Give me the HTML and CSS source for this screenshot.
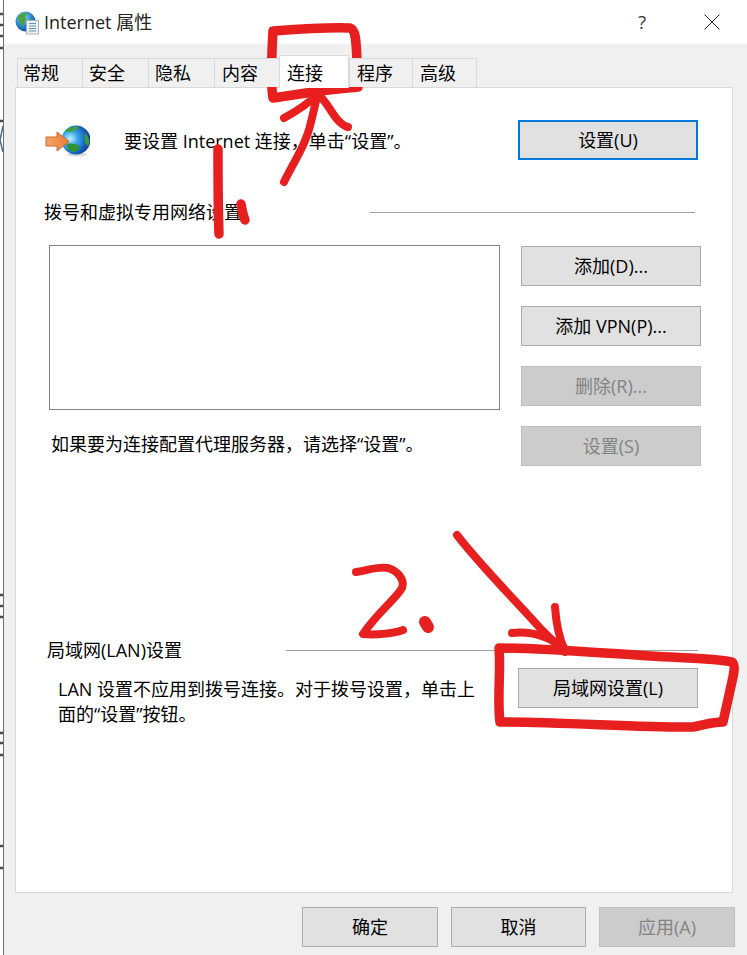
FILE: index.html
```html
<!DOCTYPE html>
<html lang="zh-CN">
<head>
<meta charset="utf-8">
<title>Internet 属性</title>
<link rel="stylesheet" href="styles.css">
</head>
<body>
<div class="screen">
  <div class="backdrop">
    <svg viewBox="0 0 3 955" width="3" height="955">
      <path d="M0 14h3M0 25h3M0 36h3M0 48h3M0 121h3M0 595h3M0 606h3M0 617h3M0 733h3M0 743h3M0 755h3M0 846h3M0 868h3" stroke="#4a4a4a" stroke-width="2.500"/>
      <path d="M3 126L0 140 3 152" stroke="#4a6a8a" stroke-width="1.500" fill="none"/>
    </svg>
  </div>
  <div class="dialog">
    <header class="titlebar">
      <svg class="title-icon" viewBox="0 0 24 24" width="24" height="24">
        <defs>
          <radialGradient id="sea1" cx="38%" cy="30%" r="75%"><stop offset="0" stop-color="#9ad4f5"/><stop offset=".55" stop-color="#2a86d0"/><stop offset="1" stop-color="#0f4c96"/></radialGradient>
        </defs>
        <circle cx="10.5" cy="10.5" r="10" fill="url(#sea1)"/>
        <path d="M3 6c2-3 6-5 9-4 1 1-1 3-2 3 1 2 2 4 0 6-1 2-1 3-2 5-2-1-2-3-3-5-1 0-2-2-2-5z" fill="#4aa63c"/>
        <path d="M14 9c2-1 4 0 6 1 0 3-1 6-3 8-2-1-3-3-3-5 0-1-1-3 0-4z" fill="#3f9a37"/>
        <rect x="11.500" y="9.500" width="12" height="13.500" fill="#eef1f4" stroke="#a9b2ba"/>
        <path d="M14 12.500h7M14 15h7M14 17.500h7M14 20h7" stroke="#5f93b8" stroke-width="1"/>
      </svg>
      <span class="title-text">Internet 属性</span>
      <span class="help">?</span>
      <svg class="close" viewBox="0 0 16 16" width="16" height="16"><path d="M.5.500l15 15M15.500.500l-15 15" stroke="#222" stroke-width="1" fill="none"/></svg>
    </header>
    <div class="client">
      <nav class="tabs">
        <span class="tab t1">常规</span>
        <span class="tab t2">安全</span>
        <span class="tab t3">隐私</span>
        <span class="tab t4">内容</span>
        <span class="tab active">连接</span>
        <span class="tab t6">程序</span>
        <span class="tab t7">高级</span>
      </nav>
      <main class="panel">
        <section class="setup-row">
          <svg class="globe" viewBox="0 0 46 34" width="46" height="34">
            <defs>
              <radialGradient id="sea2" cx="30%" cy="45%" r="72%"><stop offset="0" stop-color="#c4f0fb"/><stop offset=".35" stop-color="#3fa8e8"/><stop offset=".75" stop-color="#1560c0"/><stop offset="1" stop-color="#0b3a80"/></radialGradient>
              <linearGradient id="arr" x1="0" x2="1"><stop offset="0" stop-color="#f3a468"/><stop offset="1" stop-color="#f07c30"/></linearGradient>
            </defs>
            <ellipse cx="33" cy="31.500" rx="10" ry="1.800" fill="#d5d7d8"/>
            <circle cx="32" cy="17" r="14.500" fill="url(#sea2)"/>
            <path d="M21 8c3-3 8-5 13-4 1 1-1 3-4 4-2 0-3 1-4 1-2 0-3 0-5-1z" fill="#3fa23a"/>
            <path d="M41 10c2 1 4 5 4.500 8 0 2-.5 4-1.500 5-2-1-3.500-3-3-6 0-2-1-4 0-7z" fill="#3a9a3a"/>
            <path d="M23 21c4-1 9 0 13 2 0 2-2 4-4 5.500-3 .5-5 0-7-1-1-2-2-4-2-6.500z" fill="#2f9238"/>
            <path d="M2 14h11V9l12 9.500L13 28v-5H2z" fill="url(#arr)" stroke="#d0682a" stroke-width="1"/>
          </svg>
          <p class="setup-text">要设置 Internet 连接，单击“设置”。</p>
          <button class="btn default setup-btn">设置(U)</button>
        </section>

        <div class="group-head dial-head">
          <span class="group-label">拨号和虚拟专用网络设置</span>
          <span class="rule"></span>
        </div>

        <section class="dial">
          <div class="dial-left">
            <div class="listbox"></div>
            <p class="proxy-text">如果要为连接配置代理服务器，请选择“设置”。</p>
          </div>
          <div class="dial-btns">
            <button class="btn wide">添加(D)...</button>
            <button class="btn wide">添加 VPN(P)...</button>
            <button class="btn wide disabled">删除(R)...</button>
            <button class="btn wide disabled">设置(S)</button>
          </div>
        </section>

        <div class="group-head lan-head">
          <span class="group-label">局域网(LAN)设置</span>
          <span class="rule"></span>
        </div>

        <section class="lan">
          <p class="lan-text">LAN 设置不应用到拨号连接。对于拨号设置，单击上面的“设置”按钮。</p>
          <button class="btn lan-btn">局域网设置(L)</button>
        </section>
      </main>
      <footer class="footer">
        <button class="btn foot-a">确定</button>
        <button class="btn foot-b">取消</button>
        <button class="btn foot-c disabled">应用(A)</button>
      </footer>
    </div>
  </div>
  <svg class="ink" viewBox="0 0 747 955" width="747" height="955" fill="none" stroke="#e81f1f" stroke-width="8" stroke-linecap="round" stroke-linejoin="round">
    <path class="heavy" d="M273 31C300 29 330 27 350 28 356 30 356 40 357 60L358 87C340 89 325 90 313 92L273 98C270 80 272 50 273 31Z"/>
    <path d="M284 182C292 165 306 145 311 122 314 110 316 100 318 94"/>
    <path d="M284 118C295 112 308 104 318 94 325 100 330 110 336 118 340 123 344 126 348 127"/>
    <path class="heavy" d="M218 149C218 180 218 210 219 234"/>
    <path class="heavy" d="M241 204C242 210 243 215 245 220"/>
    <path d="M356 572C365 571 378 566 388 568 398 571 405 580 402 588 395 600 378 612 363 634 375 635 392 634 403 630"/>
    <path class="dot" d="M425 622L428 627"/>
    <path d="M457 535C480 565 515 600 540 628 550 638 558 646 565 652"/>
    <path d="M555 607C556 622 558 636 565 651"/>
    <path d="M512 633C530 631 550 636 568 651"/>
    <path class="heavy" d="M499 648C540 648 600 653 650 656 680 658 715 658 732 662 737 666 732 680 729 695L723 722C710 722 705 725 693 727 650 728 560 722 500 722 497 700 501 670 499 648Z"/>
  </svg>
</div>
</body>
</html>
```

FILE: styles.css
```css
* { box-sizing: border-box; }
html, body { margin: 0; padding: 0; background: #fff; }
body {
  font-family: "Open Sans", "Noto Sans CJK SC", sans-serif;
  font-size: 18px;
  color: #000;
}
p { margin: 0; }
.screen { position: relative; width: 747px; height: 955px; display: flex; overflow: hidden; }
.backdrop { width: 4px; flex: none; border-right: 1px solid #6f6f6f; background: #fff; line-height: 0; }
.dialog { flex: 1; display: flex; flex-direction: column; min-width: 0; }

.titlebar { height: 44px; flex: none; display: flex; align-items: center; background: #fff; padding-left: 11px; }
.title-icon { flex: none; margin-right: 5px; margin-top: 1px; }
.title-text { font-size: 18px; line-height: 24px; color: #222; }
.help { margin-left: auto; font-size: 18px; color: #333; margin-right: 58px; }
.close { margin-right: 27px; }

.client { flex: 1; background: #f0f0f0; padding: 0 10px 0 11px; display: flex; flex-direction: column; }
.tabs { height: 43px; display: flex; align-items: flex-end; padding-left: 2px; position: relative; z-index: 1; }
.tab {
  height: 29px; line-height: 28px; padding-left: 6px;
  background: #f0f0f0; border: 1px solid #d9d9d9; border-bottom: 0; margin-right: -1px;
  color: #000; font-size: 18px;
}
.t1 { width: 66px; padding-left: 5px; }
.t2 { width: 67px; }
.t3 { width: 67px; }
.t4 { width: 66px; padding-left: 7px; }
.t6 { width: 64px; padding-left: 7px; }
.t7 { width: 65px; padding-left: 7px; }
.tab.active { width: 70px; height: 33px; line-height: 34px; padding-left: 7px; background: #fff; margin-bottom: -1px; margin-right: 0; position: relative; }

.panel { height: 806px; width: 718px; flex: none; background: #fff; border: 1px solid #d9d9d9; padding: 32px 31px 0 28px; display: flex; flex-direction: column; }
.setup-row { display: flex; align-items: center; height: 40px; padding-right: 3px; }
.globe { flex: none; margin-right: 34px; }
.setup-text { flex: 1; font-size: 18px; padding-bottom: 1px; }
.btn {
  font: inherit; font-size: 18px; color: #000; background: #e1e1e1;
  border: 1px solid #adadad; padding: 0 0 2px; height: 40px; flex: none;
  display: flex; align-items: center; justify-content: center;
}
.btn.disabled { background: #ccc; color: #838383; border-color: #bfbfbf; }
.btn.default { border: 2px solid #0078d7; }
.setup-btn { width: 180px; }

.group-head { display: flex; align-items: center; }
.dial-head { height: 24px; margin-top: 40px; margin-right: 6px; }
.group-label { font-size: 18px; line-height: 24px; }
.rule { flex: 1; height: 1px; background: #a0a0a0; }
.dial-head .rule { margin-left: 128px; }

.dial { display: flex; margin-top: 21px; }
.dial-left { width: 451px; margin-left: 5px; flex: none; }
.listbox { height: 165px; border: 1px solid #828282; background: #fff; }
.proxy-text { margin-top: 21px; margin-left: 2px; line-height: 26px; white-space: nowrap; }
.dial-btns { margin-left: 21px; margin-top: 1px; display: flex; flex-direction: column; gap: 20px; }
.wide { width: 180px; }

.lan-head { height: 24px; margin-top: 172px; margin-left: 3px; margin-right: 3px; }
.lan-head .rule { margin-left: 104px; }
.lan { display: flex; margin-top: 6px; margin-left: 14px; }
.lan-text { width: 432px; line-height: 25px; margin-top: 9px; flex: none; }
.lan-btn { width: 180px; margin-left: 28px; }

.footer { flex: 1; display: flex; padding: 14px 0 0 287px; }
.foot-a { width: 136px; }
.foot-b { width: 135px; margin-left: 13px; }
.foot-c { width: 136px; margin-left: 13px; }

.ink { position: absolute; left: 0; top: 0; pointer-events: none; }
.ink .heavy { stroke-width: 9.5px; }
.ink .dot { stroke-width: 12px; }
```
